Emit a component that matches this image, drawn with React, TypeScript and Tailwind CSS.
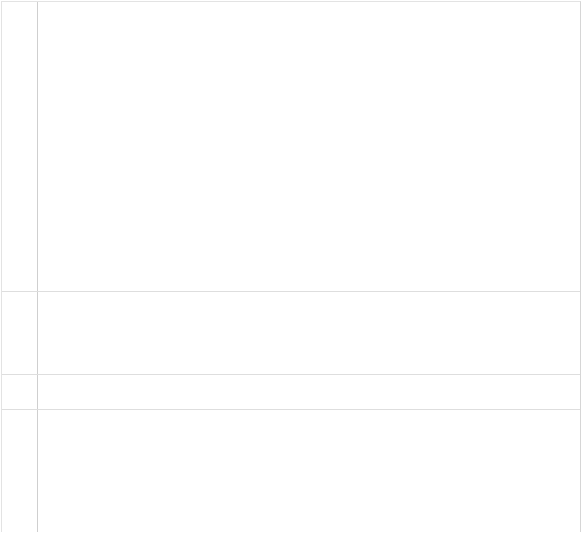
const ROWS = [
  { id: 1, h: "h-[290px]" },
  { id: 2, h: "h-[83px]" },
  { id: 3, h: "h-[35px]" },
  { id: 4, h: "h-[122px]", last: true },
];

export default function App() {
  return (
    <div className="min-h-screen bg-white">
      <div className="ml-px mt-px w-[580px] border-l border-t border-r border-l-[#e3e3e3] border-t-[#e3e3e3] border-r-[#d6d6d6]">
        {ROWS.map((r) => (
          <div
            key={r.id}
            className={`flex ${r.h} ${r.last ? "" : "border-b border-[#dedede]"}`}
          >
            <div className="w-[36px] flex-none border-r border-[#cfcfcf]" />
            <div className="flex-1" />
          </div>
        ))}
      </div>
    </div>
  );
}
